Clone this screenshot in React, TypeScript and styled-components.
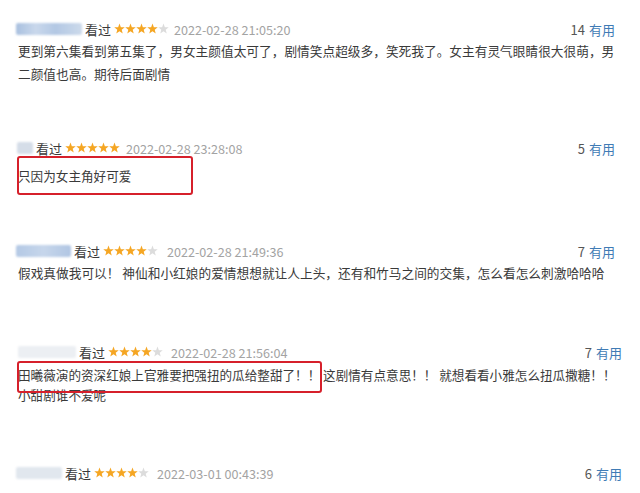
import React from 'react';
import styled, { createGlobalStyle } from 'styled-components';

const Global = createGlobalStyle`
  html, body { margin: 0; padding: 0; background: #ffffff; }
  body { font-family: "Noto Sans CJK SC", "Noto Sans", sans-serif; color: #333; }
`;

const Page = styled.div`
  width: 640px;
  height: 493px;
  overflow: hidden;
  box-sizing: border-box;
  padding-left: 16px;
  display: flex;
  flex-direction: column;
`;

const Comment = styled.section<{ $top: number; $right: number }>`
  padding-top: ${(p) => p.$top}px;
  padding-right: ${(p) => p.$right}px;
  display: flex;
  flex-direction: column;
`;

const Header = styled.div`
  display: flex;
  align-items: center;
  height: 20px;
  font-size: 13px;
  white-space: nowrap;
`;

const Name = styled.span<{ $w: number; $bg: string; $lead: number }>`
  display: inline-block;
  width: ${(p) => p.$w}px;
  height: 12px;
  margin-left: ${(p) => p.$lead}px;
  background: ${(p) => p.$bg};
  border-radius: 2px;
  filter: blur(0.8px);
`;

const Watched = styled.span`
  margin-left: 3px;
  color: #3a3a3a;
  font-size: 13px;
`;

const Stars = styled.svg`
  margin-left: 3px;
  flex: none;
`;

const DateText = styled.span<{ $gap: number }>`
  margin-left: ${(p) => p.$gap}px;
  color: #a3a3a3;
  font-size: 12.6px;
`;

const Useful = styled.span`
  margin-left: auto;
  font-size: 13px;
  color: #555;
`;

const UsefulLink = styled.span`
  margin-left: 4px;
  color: #3f7bb5;
`;

const Body = styled.div<{ $mt: number; $lh: number; $fs: number }>`
  position: relative;
  margin-top: ${(p) => p.$mt}px;
  margin-left: 2px;
  font-size: ${(p) => p.$fs}px;
  line-height: ${(p) => p.$lh}px;
  color: #3a3a3a;
  white-space: nowrap;
`;

const Line = styled.div``;

const Highlight = styled.div`
  position: absolute;
  border: 2px solid #d6202b;
  border-radius: 3px;
  box-sizing: border-box;
  pointer-events: none;
`;

const starPath = (cx: number) => {
  const pts: string[] = [];
  const R = 5.5;
  const r = 2.3;
  for (let i = 0; i < 10; i++) {
    const a = -Math.PI / 2 + (i * Math.PI) / 5;
    const rad = i % 2 === 0 ? R : r;
    pts.push(`${(cx + rad * Math.cos(a)).toFixed(2)},${(6 + rad * Math.sin(a)).toFixed(2)}`);
  }
  return pts.join(' ');
};

const StarRow: React.FC<{ n: number }> = ({ n }) => (
  <Stars width="55" height="12" viewBox="0 0 55 12">
    {[0, 1, 2, 3, 4].map((i) => (
      <polygon key={i} points={starPath(5.5 + i * 11)} fill={i < n ? '#f5a623' : '#dcdcdc'} />
    ))}
  </Stars>
);

type Item = {
  top: number;
  right: number;
  nameW: number;
  nameBg: string;
  nameLead: number;
  stars: number;
  date: string;
  dateGap: number;
  count: number;
  mt: number;
  lh: number;
  fs: number;
  lines: string[];
  box?: { left: number; top: number; width: number; height: number };
};

const items: Item[] = [
  {
    top: 19,
    right: 25,
    nameW: 66,
    nameBg: 'linear-gradient(90deg,#a9c0df 0%,#c9d8ec 30%,#b3c8e4 60%,#cddaeb 100%)',
    nameLead: 0,
    stars: 4,
    date: '2022-02-28 21:05:20',
    dateGap: 5,
    count: 14,
    mt: 0,
    lh: 23,
    fs: 12.7,
    lines: [
      '更到第六集看到第五集了，男女主颜值太可了，剧情笑点超级多，笑死我了。女主有灵气眼睛很大很萌，男',
      '二颜值也高。期待后面剧情',
    ],
  },
  {
    top: 53,
    right: 25,
    nameW: 16,
    nameBg: '#d5dde8',
    nameLead: 1,
    stars: 5,
    date: '2022-02-28 23:28:08',
    dateGap: 6,
    count: 5,
    mt: 6,
    lh: 23,
    fs: 12.6,
    lines: ['只因为女主角好可爱'],
    box: { left: -1, top: -8, width: 176, height: 39 },
  },
  {
    top: 54,
    right: 25,
    nameW: 55,
    nameBg: 'linear-gradient(90deg,#b4c9e5 0%,#c6d6eb 50%,#b1c6e3 100%)',
    nameLead: 0,
    stars: 4,
    date: '2022-02-28 21:49:36',
    dateGap: 9,
    count: 7,
    mt: 0,
    lh: 23,
    fs: 12.7,
    lines: ['假戏真做我可以！ 神仙和小红娘的爱情想想就让人上头，还有和竹马之间的交集，怎么看怎么刺激哈哈哈'],
  },
  {
    top: 58,
    right: 18,
    nameW: 58,
    nameBg: '#eceff3',
    nameLead: 2,
    stars: 4,
    date: '2022-02-28 21:56:04',
    dateGap: 8,
    count: 7,
    mt: 3,
    lh: 20,
    fs: 12.6,
    lines: [
      '田曦薇演的资深红娘上官雅要把强扭的瓜给整甜了！！ 这剧情有点意思！！ 就想看看小雅怎么扭瓜撒糖！！',
      '小甜剧谁不爱呢',
    ],
    box: { left: -1, top: -4, width: 305, height: 32 },
  },
  {
    top: 58,
    right: 18,
    nameW: 46,
    nameBg: '#e1e7ee',
    nameLead: 0,
    stars: 4,
    date: '2022-03-01 00:43:39',
    dateGap: 8,
    count: 6,
    mt: 0,
    lh: 23,
    fs: 12.6,
    lines: [],
  },
];

export default function App() {
  return (
    <>
      <Global />
      <Page>
        {items.map((it, idx) => (
          <Comment key={idx} $top={it.top} $right={it.right}>
            <Header>
              <Name $w={it.nameW} $bg={it.nameBg} $lead={it.nameLead} />
              <Watched>看过</Watched>
              <StarRow n={it.stars} />
              <DateText $gap={it.dateGap}>{it.date}</DateText>
              <Useful>
                {it.count}
                <UsefulLink>有用</UsefulLink>
              </Useful>
            </Header>
            {it.lines.length > 0 && (
              <Body $mt={it.mt} $lh={it.lh} $fs={it.fs}>
                {it.lines.map((l, i) => (
                  <Line key={i}>{l}</Line>
                ))}
                {it.box && (
                  <Highlight
                    style={{
                      left: it.box.left,
                      top: it.box.top,
                      width: it.box.width,
                      height: it.box.height,
                    }}
                  />
                )}
              </Body>
            )}
          </Comment>
        ))}
      </Page>
    </>
  );
}
